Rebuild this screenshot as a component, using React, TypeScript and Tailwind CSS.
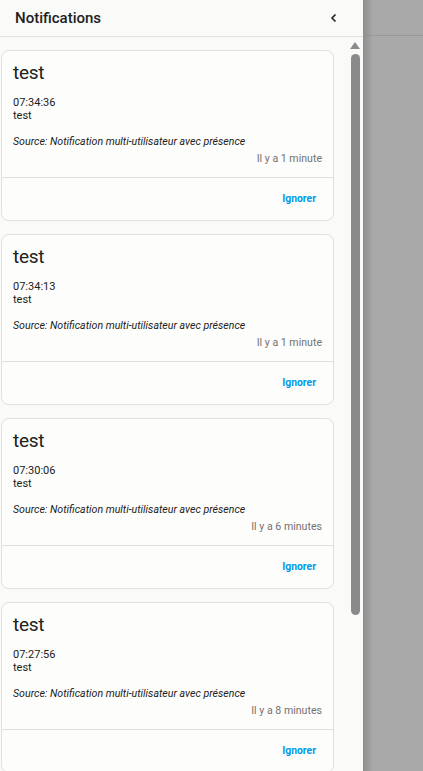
import React from "react";

const items = [
  { time: "07:34:36", ago: "Il y a 1 minute" },
  { time: "07:34:13", ago: "Il y a 1 minute" },
  { time: "07:30:06", ago: "Il y a 6 minutes" },
  { time: "07:27:56", ago: "Il y a 8 minutes" },
];

function Card({ time, ago }: { time: string; ago: string }) {
  return (
    <div className="w-[333px] h-[171px] shrink-0 rounded-[8px] border border-[#e0e0e0] bg-[#fdfdfb] flex flex-col">
      <div className="flex-1 pl-[11px] pr-[11px] pt-[10px] text-[#212121]">
        <div className="text-[19px] leading-[24px] tracking-[-0.3px]">test</div>
        <div className="mt-[11px] text-[11px] leading-[13px]">{time}</div>
        <div className="text-[11px] leading-[13px]">test</div>
        <div className="mt-[13px] text-[10.6px] leading-[13px] italic">
          Source: Notification multi-utilisateur avec présence
        </div>
        <div className="mt-[4px] text-right text-[10.6px] leading-[13px] text-[#727272]">{ago}</div>
      </div>
      <div className="h-[43px] border-t border-[#e0e0e0] flex items-center justify-end pr-[17px]">
        <span className="text-[10.4px] font-bold text-[#039be5]">Ignorer</span>
      </div>
    </div>
  );
}

export default function App() {
  return (
    <div
      className="flex w-[423px] h-[771px] overflow-hidden"
      style={{ fontFamily: "Roboto, 'Noto Sans', sans-serif" }}
    >
      <div className="w-[363px] h-full shrink-0 bg-[#fafaf8] flex flex-col">
        <div className="h-[37px] shrink-0 border-b border-[#e0e0e0] flex items-center justify-between pl-[15px] pr-[24px]">
          <span className="text-[15px] font-medium text-[#212121]">Notifications</span>
          <svg width="10" height="10" viewBox="0 0 10 10" fill="none">
            <path d="M6.5 1.5 L3 5 L6.5 8.5" stroke="#212121" strokeWidth="1.6" />
          </svg>
        </div>
        <div className="flex flex-1 min-h-0">
          <div className="w-[347px] pl-[1px] pt-[12.5px] flex flex-col gap-[13px] overflow-hidden">
            {items.map((it) => (
              <Card key={it.time} {...it} />
            ))}
          </div>
          <div className="w-[16px] flex flex-col items-center pt-[5px]">
            <svg width="10" height="7" viewBox="0 0 10 7">
              <path d="M5 0 L10 7 L0 7 Z" fill="#8a8a8a" />
            </svg>
            <div className="mt-[5px] w-[9px] h-[561px] rounded-[5px] bg-[#8a8a8a]" />
          </div>
        </div>
      </div>
      <div className="flex-1 h-full bg-[#a9a9a9] relative">
        <div className="h-[36px] border-b border-[#999999]" />
        <div className="absolute inset-y-0 left-0 w-[10px] bg-gradient-to-r from-[#8e8e8e] to-transparent" />
      </div>
    </div>
  );
}
